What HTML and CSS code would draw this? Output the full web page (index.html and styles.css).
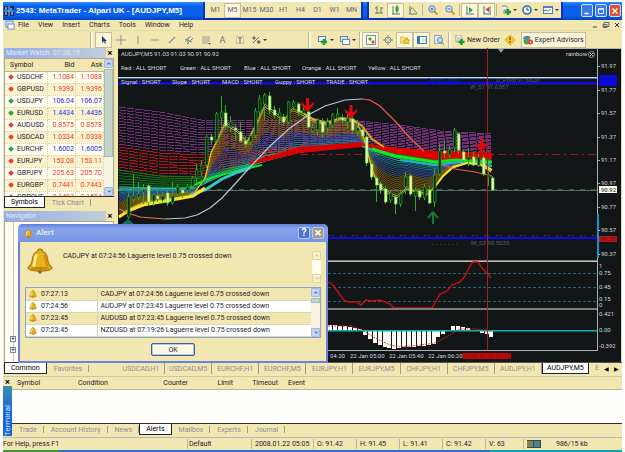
FILE: index.html
```html
<!DOCTYPE html>
<html lang="en">
<head>
<meta charset="utf-8">
<title>2543: MetaTrader - Alpari UK - [AUDJPY,M5]</title>
<link rel="stylesheet" href="styles.css">
</head>
<body>
<svg class="defs" aria-hidden="true">
  <symbol id="i-app" viewBox="0 0 10 10"><rect width="10" height="10" fill="#0b2f6b"/><path d="M0 5h10M5 0v10" stroke="#8fc4ff"/><path d="M2 1v3M7 2v2M2 6v3M8 6v3" stroke="#e8f4ff"/></symbol>
  <symbol id="i-doc" viewBox="0 0 10 10"><rect x="1" y="1" width="7" height="6" fill="#cfe0fb" stroke="#6c8fd8"/><rect x="3" y="4" width="6" height="5" fill="#fff" stroke="#6c8fd8"/></symbol>
  <symbol id="i-cursor" viewBox="0 0 10 10"><path d="M3 1v7l2-2 1 3 1-1-1-2h2z" fill="#223a6c"/></symbol>
  <symbol id="i-cross" viewBox="0 0 10 10"><path d="M5 0v10M0 5h10" stroke="#8b93a0"/></symbol>
  <symbol id="i-vline" viewBox="0 0 10 10"><path d="M5 1v8" stroke="#8b93a0"/></symbol>
  <symbol id="i-hline" viewBox="0 0 10 10"><path d="M1 5h8" stroke="#8b93a0"/></symbol>
  <symbol id="i-trend" viewBox="0 0 10 10"><path d="M2 8l6-6" stroke="#8b93a0" stroke-width="1.2"/></symbol>
  <symbol id="i-chan" viewBox="0 0 10 10"><path d="M1 7l6-6M3 9l6-6M1 4l7 3M4 2v7" stroke="#7d8694"/></symbol>
  <symbol id="i-fibo" viewBox="0 0 10 10"><path d="M1 2h8M1 4h8M1 6h8M1 8h6" stroke="#9a9f9c"/><path d="M7 8h3l-1.500 2z" fill="#667"/></symbol>
  <symbol id="i-label" viewBox="0 0 10 10"><rect x="1.500" y="1.500" width="7" height="7" fill="none" stroke="#9a9f9c" stroke-dasharray="1 1"/><path d="M3 3h4M5 3v5" stroke="#667080"/></symbol>
  <symbol id="i-shapes" viewBox="0 0 10 10"><path d="M1 3l2-2 2 2-2 2zM6 6l2-1 2 2-2 2-2-1z" fill="#69737f"/><path d="M2 8l6-6" stroke="#69737f"/></symbol>
  <symbol id="i-newchart" viewBox="0 0 10 10"><rect x=".5" y="1.500" width="7" height="5" fill="#e8f0fb" stroke="#5c7fb4"/><path d="M6 4v6M3 7h6" stroke="#19a025" stroke-width="2.500"/></symbol>
  <symbol id="i-profiles" viewBox="0 0 10 10"><rect x=".5" y="1.500" width="7" height="5" fill="#d8e4f8" stroke="#6485c0"/><rect x="2.500" y="4.500" width="7" height="5" fill="#fff" stroke="#6485c0"/></symbol>
  <symbol id="i-market" viewBox="0 0 10 10"><rect x=".5" y=".5" width="9" height="9" fill="#fdf9e2" stroke="#6f96b8"/><path d="M2 4l2-2 2 2-2 2z" fill="#37a540"/><path d="M5 7l2-2 2 2-2 2z" fill="#dd5040"/></symbol>
  <symbol id="i-target" viewBox="0 0 10 10"><circle cx="5" cy="5" r="3" fill="none" stroke="#7e8790"/><path d="M5 0v4M5 6v4M0 5h4M6 5h4" stroke="#7e8790"/></symbol>
  <symbol id="i-star" viewBox="0 0 10 10"><path d="M0 2h4l1 1h3v5H0z" fill="#f7df78" stroke="#c19a20" stroke-width=".6"/><path d="M6.500 3l1 2 2.300.3-1.700 1.500.5 2.200-2.100-1.200L4.500 9 5 6.800 3.300 5.300 5.600 5z" fill="#ffd72e" stroke="#b8860b" stroke-width=".6"/></symbol>
  <symbol id="i-term" viewBox="0 0 10 10"><rect x=".5" y="1.500" width="9" height="7" fill="#fff" stroke="#3d74b8"/><path d="M2 2v6" stroke="#3d74b8" stroke-width="2"/><path d="M4 4h5M4 6h5" stroke="#b9cbe0"/></symbol>
  <symbol id="i-tester" viewBox="0 0 10 10"><rect x=".5" y=".5" width="7" height="8" fill="#dfe6ef" stroke="#8fa6c4"/><circle cx="6" cy="5" r="2.500" fill="#c9dcf5" stroke="#7088ad"/><path d="M8 7l2 3" stroke="#7088ad"/></symbol>
  <symbol id="i-order" viewBox="0 0 10 10"><path d="M1 0h4l2 2v5H1z" fill="#fff" stroke="#7f8b94" stroke-width=".8"/><path d="M2 3h4M2 5h3" stroke="#9aa"/><path d="M6.500 4v6M3.500 7h6" stroke="#1b9b28" stroke-width="2.500"/></symbol>
  <symbol id="i-diamond" viewBox="0 0 10 10"><path d="M5 0l5 5-5 5-5-5z" fill="#f5cb2c" stroke="#c39514" stroke-width=".6"/><path d="M5 2v3M5 6v2" stroke="#7a5908" stroke-width="1.300"/></symbol>
  <symbol id="i-expert" viewBox="0 0 10 10"><circle cx="4" cy="6" r="3.500" fill="#4da34a"/><path d="M0 4c1-4 6-4 8-1z" fill="#4a7ec0"/><circle cx="7.500" cy="7" r="2.500" fill="#e0453a"/><path d="M7 6l1.500 1L7 8z" fill="#fff"/></symbol>
  <symbol id="i-bars" viewBox="0 0 10 10"><path d="M3 1v8M1 8h8M7 2v6" stroke="#4f8a4f"/><path d="M7 3h2M1 3h2" stroke="#3f73a8"/></symbol>
  <symbol id="i-candle" viewBox="0 0 10 10"><path d="M2 1v8M1 9h8M6 0v8" stroke="#4f7a5f"/><rect x="4.500" y="1.500" width="3" height="5" fill="#25a838"/></symbol>
  <symbol id="i-line" viewBox="0 0 10 10"><path d="M2 1v8M1 9h8" stroke="#5f7a8a"/><path d="M2 6c2-5 3-3 4-1l3 3" stroke="#4c9460" fill="none"/></symbol>
  <symbol id="i-zin" viewBox="0 0 10 10"><path d="M6 6l3.500 3.500" stroke="#c99b18" stroke-width="2"/><circle cx="4" cy="4" r="3.200" fill="#dcecff" stroke="#4d7fc8"/><path d="M2.500 4h3M4 2.500v3" stroke="#315f9f"/></symbol>
  <symbol id="i-zout" viewBox="0 0 10 10"><path d="M6 6l3.500 3.500" stroke="#c99b18" stroke-width="2"/><circle cx="4" cy="4" r="3.200" fill="#dcecff" stroke="#4d7fc8"/><path d="M2.500 4h3" stroke="#315f9f"/></symbol>
  <symbol id="i-scroll" viewBox="0 0 10 10"><path d="M2 1v8M1 9h8" stroke="#4f6f8a"/><path d="M4 2l4 3-4 3z" fill="#2ba43a"/></symbol>
  <symbol id="i-shift" viewBox="0 0 10 10"><path d="M2 1v8M1 9h8M8 1v7" stroke="#4f6f8a"/><path d="M7 2L3.500 4.500 7 7z" fill="#cf3b35"/></symbol>
  <symbol id="i-ind" viewBox="0 0 10 10"><path d="M1 1h4c2 0 2 4 0 4H3v4" fill="#e8f0e8" stroke="#6b8fa8"/><path d="M7 4v6M4 7h6" stroke="#1b9b28" stroke-width="2.500"/></symbol>
  <symbol id="i-clock" viewBox="0 0 10 10"><circle cx="5" cy="5" r="4" fill="#eaf4ff" stroke="#2d6fc4" stroke-width="1.600"/><path d="M5 2.500V5h2" stroke="#345" fill="none"/></symbol>
  <symbol id="i-tpl" viewBox="0 0 10 10"><rect x=".5" y="1.500" width="9" height="7" fill="#fff" stroke="#4d7fc8"/><path d="M1 2.500h8" stroke="#4d7fc8"/><path d="M1 6l2-1 2 1 3-2" stroke="#5b9a5b" fill="none"/></symbol>
  <symbol id="i-bell" viewBox="0 0 24 24"><path d="M12 1c1.500 0 2.300 1 2.300 2.300C18.500 4.500 19 9 19.500 13c.3 2 2 3.500 3.500 5 0 2-5 3.500-11 3.500S1 20 1 18c1.500-1.500 3.200-3 3.500-5C5 9 5.500 4.500 9.700 3.300 9.700 2 10.500 1 12 1z" fill="#e9b51c" stroke="#a5740c"/><path d="M9 6c-2 3-1.500 8-3 11" stroke="#fff0a0" stroke-width="2.500" fill="none"/><path d="M16 6c2 4 1 8 3 11" stroke="#d58a10" stroke-width="2" fill="none"/><ellipse cx="12" cy="19" rx="9" ry="1.600" fill="#c98a12"/><circle cx="12" cy="22" r="1.800" fill="#8f6a4a"/></symbol>
</svg>

<header class="titlebar">
  <svg class="icon"><use href="#i-app"/></svg>
  <h1>2543: MetaTrader - Alpari UK - [AUDJPY,M5]</h1>
  <div class="floatbar periods">
    <button>M1</button><button class="on">M5</button><button>M15</button><button>M30</button><button>H1</button><button>H4</button><button>D1</button><button>W1</button><button>MN</button>
  </div>
  <div class="floatbar charting">
    <button aria-label="Bar chart"><svg class="icon"><use href="#i-bars"/></svg></button>
    <button class="on" aria-label="Candlesticks"><svg class="icon"><use href="#i-candle"/></svg></button>
    <button aria-label="Line chart"><svg class="icon"><use href="#i-line"/></svg></button>
    <i class="sep"></i>
    <button aria-label="Zoom in"><svg class="icon"><use href="#i-zin"/></svg></button>
    <button aria-label="Zoom out"><svg class="icon"><use href="#i-zout"/></svg></button>
    <i class="sep"></i>
    <button class="on" aria-label="Auto scroll"><svg class="icon"><use href="#i-scroll"/></svg></button>
    <button class="on" aria-label="Chart shift"><svg class="icon"><use href="#i-shift"/></svg></button>
    <i class="sep"></i>
    <button class="drop" aria-label="Indicators"><svg class="icon"><use href="#i-ind"/></svg></button>
    <button class="drop" aria-label="Periods"><svg class="icon"><use href="#i-clock"/></svg></button>
    <button class="drop" aria-label="Templates"><svg class="icon"><use href="#i-tpl"/></svg></button>
  </div>
  <div class="winbtns">
    <button aria-label="Minimize"><svg viewBox="0 0 12 12"><path d="M3 9h5" stroke="#fff" stroke-width="2"/></svg></button>
    <button aria-label="Restore"><svg viewBox="0 0 12 12"><path d="M3 3h6v6H3zM3 4h6" stroke="#fff" fill="none"/></svg></button>
    <button class="close" aria-label="Close"><svg viewBox="0 0 12 12"><path d="M3 3l6 6M9 3L3 9" stroke="#fff" stroke-width="1.500"/></svg></button>
  </div>
</header>

<nav class="menubar">
  <svg class="icon"><use href="#i-doc"/></svg>
  <button>File</button><button>View</button><button>Insert</button><button>Charts</button><button>Tools</button><button>Window</button><button>Help</button>
  <div class="mdi">
    <button aria-label="Minimize chart"><svg viewBox="0 0 8 8"><path d="M2 6h4" stroke="#445"/></svg></button>
    <button aria-label="Restore chart"><svg viewBox="0 0 8 8"><path d="M2 1.500h5v4H2zM1 3.500h4v3H1z" stroke="#667" fill="none"/></svg></button>
    <button aria-label="Close chart"><svg viewBox="0 0 8 8"><path d="M2 2l4 4M6 2L2 6" stroke="#334"/></svg></button>
  </div>
</nav>

<div class="toolbar">
  <div class="group drawing">
    <button class="on" aria-label="Cursor"><svg class="icon"><use href="#i-cursor"/></svg></button>
    <button aria-label="Crosshair"><svg class="icon"><use href="#i-cross"/></svg></button>
    <button aria-label="Vertical line"><svg class="icon"><use href="#i-vline"/></svg></button>
    <button aria-label="Horizontal line"><svg class="icon"><use href="#i-hline"/></svg></button>
    <button aria-label="Trendline"><svg class="icon"><use href="#i-trend"/></svg></button>
    <button aria-label="Channel"><svg class="icon"><use href="#i-chan"/></svg></button>
    <button aria-label="Fibonacci"><svg class="icon"><use href="#i-fibo"/></svg></button>
    <button class="letter">A</button>
    <button aria-label="Text label"><svg class="icon"><use href="#i-label"/></svg></button>
    <button class="drop" aria-label="Arrows"><svg class="icon"><use href="#i-shapes"/></svg></button>
  </div>
  <div class="group windows">
    <button class="drop" aria-label="New chart"><svg class="icon"><use href="#i-newchart"/></svg></button>
    <button class="drop" aria-label="Profiles"><svg class="icon"><use href="#i-profiles"/></svg></button>
  </div>
  <div class="group panels">
    <button class="on" aria-label="Market watch"><svg class="icon"><use href="#i-market"/></svg></button>
    <button aria-label="Data window"><svg class="icon"><use href="#i-target"/></svg></button>
    <button class="on" aria-label="Navigator"><svg class="icon"><use href="#i-star"/></svg></button>
    <button class="on" aria-label="Terminal"><svg class="icon"><use href="#i-term"/></svg></button>
    <button aria-label="Tester"><svg class="icon"><use href="#i-tester"/></svg></button>
  </div>
  <div class="group trade">
    <button class="wide"><svg class="icon"><use href="#i-order"/></svg>New Order</button>
    <button aria-label="MetaEditor"><svg class="icon"><use href="#i-diamond"/></svg></button>
    <button class="wide on"><svg class="icon"><use href="#i-expert"/></svg>Expert Advisors</button>
  </div>
</div>

<main class="workspace">
  <aside class="side">
    <section class="dock">
      <h2 class="dock-title">Market Watch: 07:28:19<button aria-label="Close market watch">×</button></h2>
      <div class="quotes">
        <table>
          <thead><tr><th>Symbol</th><th>Bid</th><th>Ask</th></tr></thead>
          <tbody>
            <tr class="down"><td>USDCHF</td><td>1.1084</td><td>1.1088</td></tr>
            <tr class="down"><td>GBPUSD</td><td>1.9393</td><td>1.9396</td></tr>
            <tr class="up"><td>USDJPY</td><td>106.04</td><td>106.07</td></tr>
            <tr class="up"><td>EURUSD</td><td>1.4434</td><td>1.4436</td></tr>
            <tr class="down"><td>AUDUSD</td><td>0.8575</td><td>0.8578</td></tr>
            <tr class="down"><td>USDCAD</td><td>1.0334</td><td>1.0338</td></tr>
            <tr class="up"><td>EURCHF</td><td>1.6002</td><td>1.6005</td></tr>
            <tr class="down"><td>EURJPY</td><td>153.08</td><td>153.11</td></tr>
            <tr class="down"><td>GBPJPY</td><td>205.63</td><td>205.70</td></tr>
            <tr class="down"><td>EURGBP</td><td>0.7441</td><td>0.7443</td></tr>
            <tr class="down"><td>GBPCHF</td><td>2.1497</td><td>2.1504</td></tr>
          </tbody>
        </table>
        <div class="scroll"><button aria-label="Scroll up">⌃</button><i class="thumb"></i><button class="dn" aria-label="Scroll down">⌃</button></div>
      </div>
      <div class="tabs"><button class="on">Symbols</button><button>Tick Chart</button></div>
    </section>
    <section class="dock nav">
      <h2 class="dock-title">Navigator<button aria-label="Close navigator">×</button></h2>
      <div class="tree"><button>+</button><button>+</button></div>
      <div class="tabs"><button class="on">Common</button><button>Favorites</button></div>
    </section>
  </aside>

  <section class="chartcol">
    <svg id="chart" class="chart" viewBox="118 48 504 314" preserveAspectRatio="xMinYMin meet" role="img" aria-label="AUDJPY five minute chart"></svg>
    <div class="charttabs">
      <button>USDCAD,H1</button><button>USDCAD,M5</button><button>EURCHF,H1</button><button>EURCHF,M5</button><button>EURJPY,H1</button><button>EURJPY,M5</button><button>CHFJPY,H1</button><button>CHFJPY,M5</button><button>AUDJPY,H1</button><button class="on">AUDJPY,M5</button>
      <span class="more">E</span><button class="arrow" aria-label="Previous tabs">◀</button><button class="arrow" aria-label="Next tabs">▶</button>
    </div>
  </section>
</main>

<section class="terminal">
  <div class="term-side"><button aria-label="Close terminal">×</button><h2>Terminal</h2></div>
  <div class="term-main">
    <table><thead><tr><th>Symbol</th><th>Condition</th><th>Counter</th><th>Limit</th><th>Timeout</th><th>Event</th></tr></thead></table>
    <div class="term-body"></div>
    <div class="tabs"><button>Trade</button><button>Account History</button><button>News</button><button class="on">Alerts</button><button>Mailbox</button><button>Experts</button><button>Journal</button></div>
  </div>
</section>

<footer class="status">
  <span class="help">For Help, press F1</span><span class="profile">Default</span><span class="time">2008.01.22 05:05</span><span>O: 91.42</span><span>H: 91.45</span><span>L: 91.41</span><span>C: 91.42</span><span class="vol">V: 63</span>
  <span class="net"><svg viewBox="0 0 14 8"><rect width="14" height="8" fill="#27505a"/><path d="M1 1v6M3 1v6M5 1v6" stroke="#d9c23a"/><path d="M8 1v6M10 1v6M12 1v6" stroke="#7fb0c0"/></svg>986/15 kb</span>
</footer>
<div class="taskbar"><i class="start"></i><i class="tasks"></i><i class="tray"></i></div>

<section class="alert" role="dialog" aria-labelledby="alert-title">
  <header>
    <svg class="icon"><use href="#i-bell"/></svg><h2 id="alert-title">Alert</h2>
    <button aria-label="Help">?</button><button class="x" aria-label="Close alert">×</button>
  </header>
  <div class="message">
    <svg class="bell"><use href="#i-bell"/></svg>
    <p>CADJPY at 07:24:56 Laguerre level 0.75 crossed down</p>
    <div class="scroll off"><button aria-label="Up" disabled>⌃</button><i></i><button class="dn" aria-label="Down" disabled>⌃</button></div>
  </div>
  <div class="list">
    <table>
      <tbody>
        <tr><td><svg class="icon"><use href="#i-bell"/></svg>07:27:13</td><td>CADJPY at 07:24:56 Laguerre level 0.75 crossed down</td></tr>
        <tr><td><svg class="icon"><use href="#i-bell"/></svg>07:24:56</td><td>AUDJPY at 07:23:45 Laguerre level 0.75 crossed down</td></tr>
        <tr><td><svg class="icon"><use href="#i-bell"/></svg>07:23:45</td><td>AUDUSD at 07:23:45 Laguerre level 0.75 crossed down</td></tr>
        <tr><td><svg class="icon"><use href="#i-bell"/></svg>07:23:45</td><td>NZDUSD at 07:19:26 Laguerre level 0.75 crossed down</td></tr>
      </tbody>
    </table>
    <div class="scroll"><button aria-label="Scroll alerts up">⌃</button><i class="thumb short"></i><button class="dn" aria-label="Scroll alerts down">⌃</button></div>
  </div>
  <button class="ok">OK</button>
</section>
<script src="chart.js"></script>
</body>
</html>
```
FILE: styles.css
```css
* { box-sizing: border-box; }
:root { --cream: #f2e6b1; --ink: #1f2230; --mute: #8d8e9a; --line: #b5b9a4; }
body {
  margin: 0; padding: 2px 3px 0; min-height: 100vh;
  display: flex; flex-direction: column; position: relative;
  background: #fff; color: var(--ink);
  font: 7px/10px Roboto, "Liberation Sans", sans-serif;
}
h1, h2, p { margin: 0; font-size: inherit; font-weight: normal; }
button { font: inherit; color: inherit; background: none; border: 0; padding: 0; margin: 0; display: flex; align-items: center; justify-content: center; white-space: nowrap; }
table { border-collapse: collapse; table-layout: fixed; }
th, td { padding: 0; font-weight: normal; text-align: left; white-space: nowrap; }
.defs { position: absolute; width: 0; height: 0; }
.icon { width: 10px; height: 10px; flex: none; }

.titlebar { height: 18px; display: flex; align-items: stretch; padding-left: 1px; background: linear-gradient(#2a8cff, #0a5fe8 25%, #0860ee 75%, #0444b8); color: #fff; }
.titlebar > .icon { margin: 4px 2px 0 0; }
.titlebar h1 { flex: none; width: 187px; font: bold 8px/17px "Liberation Sans", Arial, sans-serif; white-space: nowrap; }
.floatbar { display: flex; align-items: center; background: var(--cream); border: solid #0a34b4; border-width: 0 2px 2px; color: #59658a; }
.periods { padding: 0 1px 0 2px; margin-right: 4px; }
.periods button { width: 17px; height: 15px; }
.charting { padding-left: 1px; }
.charting button { width: 17px; height: 15px; }
.charting .sep { width: 1px; height: 12px; margin: 0 1px; background: var(--line); }
.on { background: #fbf6da; outline: 1px solid #c3bf9c; outline-offset: -1px; }
.charting .drop { width: 21px; }
.drop::after { content: ""; border: solid transparent; border-width: 2px 2px 0; border-top-color: #333; margin-left: 2px; }
.winbtns { margin-left: auto; display: flex; gap: 2px; align-items: center; padding: 0 1px 1px 0; }
.winbtns button { width: 12px; height: 13px; border: 1px solid #cfe0ff; border-radius: 2px; background: #3d7ae8; }
.winbtns .close { background: #e0512f; }
.winbtns svg { width: 10px; height: 10px; }

.menubar { height: 10px; display: flex; align-items: center; gap: 9px; background: var(--cream); padding-left: 2px; }
.menubar > .icon { margin-right: -6px; }
.mdi { margin-left: auto; display: flex; gap: 3px; padding-right: 1px; }
.mdi svg { width: 8px; height: 8px; }

.toolbar { height: 18px; display: flex; align-items: center; background: var(--cream); border-top: 1px solid #e4d9ac; padding-left: 88px; }
.group { display: flex; align-items: center; border-left: 2px solid #fbf6da; box-shadow: -1px 0 var(--line); padding-left: 2px; }
.group button { width: 17px; height: 16px; }
.group .drop { width: 22px; }
.group .letter { color: #69737f; font-size: 9px; }
.drawing { width: 218px; }
.windows { width: 51px; padding-left: 4px; }
.panels { width: 89px; padding-left: 0; }
.group .wide { width: auto; gap: 2px; padding: 0 2px; }
.trade .on { margin-left: 2px; }

.workspace { flex: 1; display: flex; background: var(--cream); gap: 3px; }
.side { width: 112px; display: flex; flex-direction: column; gap: 3px; padding: 0 1px; }
.dock { display: flex; flex-direction: column; }
.nav { flex: 1; }
.dock-title { height: 10px; display: flex; justify-content: space-between; padding-left: 2px; background: linear-gradient(90deg, #93aee6, #c6d0d8); color: #e3ebf6; }
.dock-title button { width: 8px; background: var(--cream); color: #000; font-size: 9px; font-weight: bold; }
.quotes { height: 138px; overflow: hidden; display: flex; border: 1px solid #a8a88e; border-bottom: 0; background: #fffdf0; }
.quotes table { flex: 1; height: max-content; }
.quotes th { height: 12px; background: var(--cream); padding-left: 5px; border-bottom: 1px solid var(--line); }
.quotes th + th { padding: 0 1px 0 0; text-align: right; }
.quotes td { height: 12px; border: dotted #dcd49c; border-width: 0 1px 1px 0; }
.quotes td:not(:first-child) { text-align: right; padding-right: 1px; width: 28px; }
.quotes tr:nth-child(even) td { background: #f9f2cf; }
.quotes td:first-child::before { content: ""; display: inline-block; width: 4px; height: 4px; margin: 0 4px 0 4px; transform: rotate(45deg); background: #e23c2e; }
.quotes .up td:first-child::before { background: #24a53a; }
.down td + td { color: #ee3a22; }
.up td + td { color: #2a2ee0; }
.scroll { width: 9px; flex: none; display: flex; flex-direction: column; justify-content: space-between; background: #f6f3e0; }
.scroll button { height: 9px; background: #c5d4f4; border: 1px solid #a6b8e2; color: #3c5598; font-size: 9px; line-height: 13px; align-items: flex-start; border-radius: 1px; }
.scroll .dn { transform: rotate(180deg); }
.thumb { flex: 1; margin: 1px 0 30px; background: #c5d4c9; border: 1px solid #a9bdb6; }
.thumb.short { flex: none; height: 5px; margin: -24px 0 0; }
.off button { background: #f8f0c6; color: #c9c59c; border-color: #ddd3a0; }
.off i { flex: 1; background: #fffdf0; }
.tabs { display: flex; height: 12px; border-top: 1px solid #333; color: var(--mute); }
.tabs button { padding: 0 7px; position: relative; }
.tabs button:not(.on)::after { content: ""; position: absolute; right: 0; top: 2px; bottom: 2px; border-right: 1px solid #9a9a90; }
.tabs .on { background: #fff; color: #000; outline: 0; border: solid #222; border-width: 0 1px 1px; padding: 0 6px; }
.tree { flex: 1; background: #fffdf4; border: 1px solid #a8a88e; border-bottom: 0; display: flex; flex-direction: column; justify-content: flex-end; gap: 5px; padding: 0 5px 9px; background-image: linear-gradient(90deg, transparent 8px, #c9c7a4 8px, #c9c7a4 9px, transparent 9px); }
.tree button { width: 6px; height: 6px; border: 1px solid #7d86a0; background: #fff; }

.chartcol { flex: 1; min-width: 0; display: flex; flex-direction: column; }
.chart { width: 100%; flex: 1; min-height: 0; display: block; background: #121617; }
.chart text { font: 6px Roboto, "Liberation Sans", sans-serif; fill: #d4d8d8; }
.chart .faint { fill: #5a5e5e; }
.chart .navy { fill: #1a1a9a; }
.chart .blueink { fill: #1010a0; }
.chart .redink { fill: #7a0c0c; }
.chart .dark { fill: #111; }
.charttabs { height: 12px; display: flex; align-items: stretch; border-top: 1px solid #555; color: var(--mute); }
.charttabs button { flex: 1 1 47px; border-right: 1px solid #9a9a90; margin: 0; }
.charttabs .on { color: #000; background: #fff; outline: 0; border: 1px solid #222; border-top: 0; }
.charttabs .more { padding-left: 6px; width: 13px; flex: none; overflow: hidden; }
.charttabs .arrow { flex: 0 0 10px; border: 0; color: #000; font-size: 6px; }

.terminal { margin-top: 2px; height: 60px; display: flex; background: var(--cream); border-top: 1px solid #c9c7a4; box-shadow: 0 -2px var(--cream); }
.term-side { width: 9px; display: flex; flex-direction: column; }
.term-side button { height: 9px; color: #000; font-weight: bold; font-size: 9px; }
.term-side h2 { flex: 1; background: linear-gradient(0deg, #3b8fb0, #1660e0 60%); color: #cfe4fa; writing-mode: vertical-rl; transform: rotate(180deg); line-height: 9px; font-size: 8px; }
.term-main { flex: 1; display: flex; flex-direction: column; }
.term-main table { width: 100%; }
.term-main th { height: 12px; border-bottom: 1px solid var(--line); padding-left: 5px; width: 61px; }
.term-main th:nth-child(2) { width: 75px; }
.term-main th:nth-child(3) { width: 40px; text-align: right; }
.term-main th:nth-child(4) { width: 45px; text-align: right; }
.term-main th:nth-child(5) { width: 47px; text-align: right; padding-right: 2px; }
.term-main th:last-child { width: auto; padding-left: 8px; }
.term-body { flex: 1; background: #fffefa; }
.term-main .tabs { padding: 0 0 1px; height: 13px; }
.status { height: 13px; display: flex; align-items: center; background: var(--cream); border-top: 1px solid #b5b9c0; margin-top: 1px; box-shadow: 0 -1px var(--cream); }
.status span { width: 43px; padding-left: 3px; border-left: 1px solid var(--line); }
.status .help { width: 184px; padding: 0; border: 0; }
.status .profile { width: 64px; padding-left: 1px; }
.status .time { width: 62px; }
.status .vol { width: 38px; }
.status .net { flex: 1; display: flex; gap: 15px; align-items: center; }
.status svg { width: 14px; height: 8px; }
.taskbar { height: 2px; display: flex; }
.taskbar .start { width: 55px; background: #3a9a3c; }
.taskbar .tasks { flex: 1; background: #2f6fc8; }
.taskbar .tray { width: 132px; background: #12a0b4; }

.alert { position: absolute; left: 18px; top: 224px; width: 310px; background: var(--cream); border: 2px solid #6c80e0; border-top: 0; border-radius: 5px 5px 0 0; padding: 0 5px 5px; }
.alert header { display: flex; align-items: center; gap: 2px; height: 18px; margin: 0 -7px; padding: 0 4px 0 6px; background: linear-gradient(#5f7cd8, #86a4ec 25%, #7795e4); border-radius: 5px 5px 0 0; color: #dfe6dc; }
.alert header .icon { width: 9px; height: 9px; }
.alert h2 { flex: 1; font-size: 8px; font-weight: bold; padding-left: 1px; }
.alert header button { width: 12px; height: 12px; border: 1px solid #b9c8ee; border-radius: 2px; background: #4a74c8; color: #fff; font-size: 10px; font-weight: bold; }
.alert header .x { background: #a59a86; font-size: 13px; }
.message { display: flex; align-items: flex-start; height: 36px; margin-top: 9px; }
.bell { width: 26px; height: 26px; margin: -3px 10px 0 2px; flex: none; }
.message p { flex: 1; white-space: nowrap; }
.message .scroll { height: 32px; }
.list { display: flex; height: 51px; border: 1px solid #8ba4cf; }
.list table { flex: 1; }
.list td { height: 12px; padding-left: 3px; border-bottom: 1px solid #ddd7ae; }
.list td:first-child { width: 71px; border-right: 1px solid #d3d0b0; }
.list tr:nth-child(even) td { background: #fff; }
.list .icon { width: 8px; height: 8px; margin-right: 4px; vertical-align: middle; }
.ok { width: 44px; height: 13px; margin: 5px auto 0; background: #fbf8e4; border: 1px solid #3d5c9c; border-radius: 2px; box-shadow: inset 0 0 0 1px #b3c8ef; }
```
FILE: chart.js
```js
const NS = "http://www.w3.org/2000/svg";
const chart = document.getElementById("chart");

function add(tag, attrs, text) {
  const el = document.createElementNS(NS, tag);
  for (const key in attrs) el.setAttribute(key, attrs[key]);
  if (text !== undefined) el.textContent = text;
  chart.appendChild(el);
  return el;
}
const rect = (x, y, width, height, fill) => add("rect", { x, y, width, height, fill });
const label = (x, y, text, cls = "") => add("text", { x, y, class: cls }, text);
const path = (points, stroke, extra = {}) =>
  add("polyline", { points: points.map(p => p.join(",")).join(" "), fill: "none", stroke, ...extra });
const hline = (x1, x2, y, stroke, extra = {}) =>
  add("line", { x1, x2, y1: y + 0.5, y2: y + 0.5, stroke, ...extra });

function at(curve, x) {
  for (let i = 1; i < curve.length; i++) {
    const [x0, y0] = curve[i - 1], [x1, y1] = curve[i];
    if (x <= x1) return y0 + (y1 - y0) * (x - x0) / (x1 - x0);
  }
  return curve[curve.length - 1][1];
}

// Edges of the moving-average bands, slowest to fastest.
const purpleTop = [[119,107],[160,112],[200,120],[300,120],[360,121],[400,125],[440,131],[492,134]];
const redTop = [[119,147],[160,153],[200,155],[240,152],[300,146],[360,143],[387,147],[433,151],[492,153]];
const redBottom = [[119,170],[160,176],[200,177],[220,172],[245,165],[265,160],[300,152],[360,145],[387,152],[435,160],[492,159]];
const greenBottom = [[119,187],[160,188],[195,188],[210,181],[225,174],[245,168],[265,161],[300,152],[360,146],[400,157],[435,163],[492,163]];
const fast = [[119,218],[128,210],[143,203],[177,198],[193,195],[205,178],[211,152],[217,140],[225,122],[237,130],[247,141],[257,122],[265,104],[277,114],[284,120],[292,108],[300,112],[313,120],[327,124],[340,118],[357,122],[364,138],[372,170],[377,183],[387,193],[397,198],[407,189],[417,193],[428,195],[434,188],[443,177],[453,168],[467,163],[480,165],[492,173]];

function band(top, bottom, count, colour, extra) {
  for (let i = 0; i < count; i++) {
    const f = count === 1 ? 0 : i / (count - 1);
    const points = [];
    for (let x = 119; x <= 492; x += 2) points.push([x, (at(top, x) * (1 - f) + at(bottom, x) * f).toFixed(1)]);
    path(points, typeof colour === "function" ? colour(f) : colour, extra);
  }
}

rect(118, 48, 504, 1, "#b9b9aa");
rect(621, 48, 1, 314, "#d8d4b8");
hline(118, 597, 190, "#5d6a72");
hline(118, 597, 189, "#2c6a2c", { "stroke-dasharray": "5 6" });
hline(300, 597, 154, "#a01818", { "stroke-dasharray": "8 4 2 4" });

band(purpleTop, redTop, 15, "#74307c", { "stroke-dasharray": "7 1", "shape-rendering": "crispEdges" });
band(redTop, redBottom, 9, "#b81416", { "shape-rendering": "crispEdges", "stroke-dasharray": "9 1" });
band(redBottom, greenBottom, 7, "#137a17", {});
band(greenBottom, fast, 22, f =>
  f < 0.1 ? "#2fc4b4" : f < 0.25 ? "#1c86a8" : f < 0.5 ? "#35589c" : f < 0.92 ? "#8a6414" : "#ecd42a",
  { "stroke-width": 0.8 });

function solid(top, bottom, from, to, fill) {
  const up = [], down = [];
  for (let x = from; x <= to; x += 2) {
    up.push([x, at(top, x)]);
    down.unshift([x, at(bottom, x)]);
  }
  add("polygon", { points: up.concat(down).map(p => p.join(",")).join(" "), fill });
}
solid(redTop, redBottom, 362, 492, "#dc0000");
solid([[250,162],[300,147],[362,142]], [[250,165],[300,153],[362,147]], 250, 362, "#d80000");
path([[190,187],[210,178],[240,170],[262,165]], "#14e22c", { "stroke-width": 2 });
path([[190,195],[205,190],[222,179],[238,172],[250,168]], "#35c8c4", { "stroke-width": 3 });
path([[119,217],[128,211],[143,205],[177,199],[193,196],[205,188]], "#ffe02e", { "stroke-width": 3 });
path([[372,149],[395,156],[435,162],[455,160],[492,162]], "#12e81c", { "stroke-width": 3 });
path([[400,160],[435,165],[460,162],[492,166]], "#25b4c4", { "stroke-width": 2 });
path([[434,188],[443,176],[453,167],[467,163],[480,164],[492,170]], "#f4e02e", { "stroke-width": 2 });
path([[300,111],[313,119],[327,123],[340,118],[352,119],[362,126],[372,139],[384,147]], "#f0a030", { "stroke-width": 2 });

// Slow curve: red when falling, pale when rising.
path([[119,209],[128,213],[140,217],[165,219]], "#f0705c", { "stroke-width": 1.2 });
path([[165,219],[185,218],[197,215],[210,208],[222,198],[235,184],[250,167],[270,146],[290,128],[310,114],[325,106],[345,100],[362,99]], "#b5c5d8", { "stroke-width": 1.2 });
path([[362,99],[370,100],[380,106],[395,121],[410,138],[424,151]], "#f0604c", { "stroke-width": 1.2 });
path([[440,164],[455,169],[475,172],[492,176]], "#f0604c", { "stroke-width": 1.2 });

// [x, high, body top, body bottom, low, falling]
const candles = [
  [128,193,197,217,219,0],[133,174,196,199,202,0],[138,182,194,197,200,0],[143,184,190,192,204,0],[148,184,186,202,206,1],[153,193,195,201,206,0],[157,188,196,199,202,1],[162,192,196,200,204,0],[167,191,193,203,206,1],[172,182,196,203,205,0],[177,184,187,194,196,0],[182,187,190,193,198,1],[187,184,187,190,196,0],[192,176,178,186,188,0],[196,164,170,178,184,0],[201,160,165,172,176,0],[206,135,137,165,168,0],[211,134,137,140,144,1],[216,112,114,140,142,0],[221,96,112,118,130,0],[225,105,113,126,130,1],[230,116,122,127,132,0],[235,124,128,130,140,1],[240,122,132,141,142,1],[245,136,141,144,148,1],[250,134,136,142,145,0],[255,108,111,135,138,0],[259,95,99,112,116,0],[264,93,95,104,120,0],[269,92,96,110,114,1],[274,106,110,115,118,1],[279,108,113,116,124,0],[283,114,117,122,125,1],[288,101,102,122,124,0],[293,100,102,107,110,0],[298,102,104,112,116,1],[303,106,110,113,118,0],[308,110,112,127,128,1],[312,124,128,131,133,0],[317,118,120,130,136,0],[322,118,122,132,138,1],[327,118,122,128,133,0],[332,113,115,125,128,0],[337,108,114,118,122,0],[342,114,118,120,124,1],[347,114,118,122,128,0],[352,116,119,130,133,1],[357,120,128,131,136,0],[362,126,130,136,140,1],[366,133,137,163,166,1],[371,160,164,177,180,1],[376,176,178,185,202,1],[380,182,184,190,194,1],[385,186,189,202,204,1],[390,190,193,200,203,0],[395,194,197,204,214,1],[400,190,194,204,207,0],[405,172,177,187,194,0],[410,174,176,194,196,1],[415,188,191,196,211,0],[419,189,191,197,200,1],[424,184,187,198,200,0],[429,186,190,203,204,1],[434,168,175,202,207,0],[439,144,151,174,176,0],[444,140,151,153,158,1],[449,146,150,155,158,0],[454,128,130,148,152,0],[458,133,134,150,154,1],[463,150,152,160,162,1],[468,148,157,160,166,0],[473,152,157,165,166,1],[478,154,157,165,167,0],[483,155,158,174,176,1],[488,172,175,177,186,0],[492,176,178,190,191,1]
];
for (const [x, high, top, bottom, low, falling] of candles) {
  rect(x, high, 1, low - high, "#35a52f");
  add("rect", { x: x - 0.5, y: top, width: 2.5, height: bottom - top, fill: falling ? "#f4f7b4" : "#0d2a10", stroke: falling ? "#5fdc3c" : "#1f9a2c", "stroke-width": 0.7 });
}

function arrow(x, y, fill, direction) {
  add("path", { d: `M-1.500 -7h3v8l4.500 -4v3L0 7L-6 0v-3l4.500 4z`, fill, transform: `translate(${x} ${y}) scale(1 ${direction})` });
}
arrow(307.5, 105, "#e00808", 1);
arrow(351, 112, "#e00808", 1);
arrow(481.5, 145, "#e00808", 1);
add("path", { d: "M433 224v-12M428 218l5 -6l5 6", fill: "none", stroke: "#147a34", "stroke-width": 2 });
add("path", { d: "M122 224l6 -5l6 5z", fill: "#1c7058" });

// Header lines and captions.
rect(118, 77, 479, 1, "#cfd6cf");
rect(118, 78, 479, 1, "#3a6ab8");
rect(118, 82, 479, 2, "#0a0af0");
hline(118, 597, 84, "#2222a8", { "stroke-dasharray": "1 1" });
label(121, 56, "AUDJPY,M5  91.03 91.03 90.91 90.92");
[[121, "Red : ALL SHORT"], [180, "Green : ALL SHORT"], [244, "Blue : ALL SHORT"], [302, "Orange : ALL SHORT"], [368, "Yellow : ALL SHORT"]].forEach(([x, t]) => label(x, 70, t));
[[121, "Signal : SHORT"], [172, "Slope : SHORT"], [222, "MACD : SHORT"], [275, "Guppy : SHORT"], [326, "TRADE : SHORT"]].forEach(([x, t]) => label(x, 84, t));
label(427, 82, "Target Level", "navy");
label(496, 82, "D_Pivot 91.6828", "faint");
label(470, 89, "W_S1 91.6387", "faint");
label(471, 245, "M_S3 90.5033", "faint");
label(566, 56, "rainbow");
add("circle", { cx: 591.5, cy: 54.5, r: 3, fill: "none", stroke: "#b9bdbd", "stroke-width": 0.8 });
path([[590,53],[593,56]], "#b9bdbd");
path([[593,53],[590,56]], "#b9bdbd");
add("path", { d: "M498 49h6l-3 4z", fill: "#8d9cab" });

// Support levels.
rect(118, 237, 479, 2, "#0a0af4");
hline(328, 597, 235, "#9a1a1a", { "stroke-dasharray": "2 2 1 7" });
hline(432, 458, 244, "#8a1a1a", { "stroke-dasharray": "1 3" });

// Oscillator pane.
rect(118, 260, 479, 1, "#8a7a5c");
rect(118, 261, 479, 1, "#b9c2d0");
[273, 287, 301].forEach(y => hline(118, 597, y, "#1d6a72", { "stroke-dasharray": "3 2" }));
path([[328,282],[333,285],[338,292],[343,299],[348,302],[357,302],[361,305],[366,300],[372,301],[380,300],[390,304],[394,308],[432,308],[435,303],[440,294],[447,291],[452,285],[460,282],[465,276],[470,266],[473,262],[478,262],[482,268],[487,273],[491,278]], "#cc0c0c", { "stroke-width": 1.4 });
rect(118, 308, 479, 2, "#7c7c7c");

// Histogram pane.
const bars = [[330,-5],[335,-5],[340,-4],[345,-4],[350,-3],[355,-2],[360,-1],[365,4],[370,8],[375,12],[380,14],[385,16],[389,17],[394,18],[399,17],[404,16],[409,16],[414,16],[419,15],[424,15],[429,14],[434,13],[438,6],[443,3],[453,-4],[458,-4],[463,-3],[468,-2],[482,2],[487,3],[491,6]];
for (const [x, h] of bars) rect(x - 2, h < 0 ? 330 + h : 331, 4, Math.abs(h), "#fbfbf6");
rect(118, 330, 479, 1.500, "#10b0b0");
path([[328,326],[350,326],[362,330],[375,338],[390,345],[400,347],[420,345],[435,343],[450,335],[460,329],[475,329],[492,331]], "#d03028", { "stroke-dasharray": "2 1", "stroke-width": 0.9 });
rect(118, 350, 479, 1, "#a8aeb2");

// Axis and crosshair.
rect(487, 48, 1, 302, "#a02222");
rect(597, 48, 1, 303, "#a8aeb2");
rect(597, 214, 2, 44, "#1a90d0");
[[66, "91.97"], [90, "91.77"], [113, "91.57"], [137, "91.37"], [160, "91.17"], [183, "90.97"], [207, "90.77"], [230, "90.57"], [254, "90.37"], [266, "1"], [273, "0.75"], [287, "0.45"], [299, "0.15"], [305, "0"], [314, "0.421"], [330, "0.00"], [346, "-0.392"]].forEach(([y, t]) => {
  if (y < 260) rect(598, y, 2, 1, "#a8aeb2");
  label(y > 260 ? 599 : 601, y + 2, t);
});
rect(599, 75, 18, 11, "#0a0ae0");
label(600, 82, "91.82", "blueink");
rect(599, 186, 18, 7, "#fbfaf0");
label(601, 192, "90.92", "dark");
rect(599, 236, 18, 6, "#b01818");
label(601, 241, "90.50", "redink");
[[330, "04:20"], [350, "22 Jan 05:00"], [389, "22 Jan 05:40"], [428, "22 Jan 06:20"]].forEach(([x, t]) => label(x, 358, t));
rect(463, 353, 48, 6, "#c80808");
label(464, 358, "2008.01.22 07:05", "redink");
```
